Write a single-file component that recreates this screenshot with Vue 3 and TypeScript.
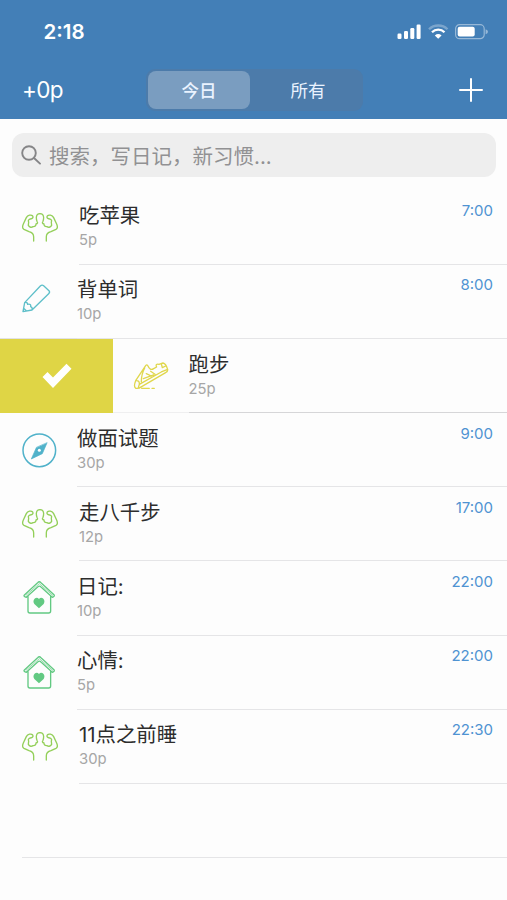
<script setup lang="ts">
import { ref } from 'vue'

type IconName = 'muscle' | 'pencil' | 'shoe' | 'compass' | 'house'

interface Habit {
  title: string
  points: string
  time: string
  icon: IconName
  inset?: boolean
  swiped?: boolean
}

const tabs = ['今日', '所有']
const activeTab = ref(0)

const habits: Habit[] = [
  { title: '吃苹果', points: '5p', time: '7:00', icon: 'muscle', inset: true },
  { title: '背单词', points: '10p', time: '8:00', icon: 'pencil' },
  { title: '跑步', points: '25p', time: '', icon: 'shoe', swiped: true },
  { title: '做面试题', points: '30p', time: '9:00', icon: 'compass' },
  { title: '走八千步', points: '12p', time: '17:00', icon: 'muscle', inset: true },
  { title: '日记:', points: '10p', time: '22:00', icon: 'house' },
  { title: '心情:', points: '5p', time: '22:00', icon: 'house' },
  { title: '11点之前睡', points: '30p', time: '22:30', icon: 'muscle', inset: true },
]

const halfFigure =
  'M72 138V126C72 115 67 112 58 110L43 103C39 101 38 94 41 87L50 68C54 60 65 58 69 63C72 68 68 71 62 72C56 74 55 77 57 81L56 91C60 98 66 98 70 95C76 96 79 92 79 87C84 86 85 83 82 79Q80 75 80 67Q81 56 91 56'
</script>

<template>
  <main class="screen">
    <header class="header">
      <div class="status">
        <span class="clock">2:18</span>
        <svg class="indicators" viewBox="0 0 92 18" fill="#fff">
          <rect x="0.5" y="10.5" width="4" height="5.5" rx="1.2" />
          <rect x="7" y="8" width="4" height="8" rx="1.2" />
          <rect x="13.3" y="5" width="4" height="11" rx="1.2" />
          <rect x="19.6" y="1.5" width="4" height="14.5" rx="1.2" />
          <g fill="none" stroke="#fff" stroke-width="2.3">
            <path d="M32 6.3C37 1.2 45.5 1.2 50.5 6.3" opacity=".3" />
            <path d="M35 9.3C38.5 5.8 44 5.8 47.5 9.3" />
          </g>
          <path d="M41.2 15.8L37.8 12.4Q41.2 9.5 44.6 12.4Z" />
          <rect x="58.6" y="1.7" width="28.6" height="14" rx="4" fill="none" stroke="#fff" stroke-width="1.2" opacity=".45" />
          <rect x="60.7" y="3.8" width="17" height="9.8" rx="2" />
          <path d="M88.6 6.3Q91 7 91 8.7T88.6 11.2Z" opacity=".45" />
        </svg>
      </div>
      <nav class="nav">
        <span class="total">+0p</span>
        <div class="segments">
          <button
            v-for="(tab, i) in tabs"
            :key="tab"
            class="segment"
            :class="{ active: activeTab === i }"
            @click="activeTab = i"
          >{{ tab }}</button>
        </div>
        <svg class="add" viewBox="0 0 24 24" stroke="#fff" stroke-width="2" stroke-linecap="round">
          <path d="M12 1V23M1 12H23" />
        </svg>
      </nav>
    </header>

    <div class="search">
      <svg class="magnifier" viewBox="0 0 20 20" fill="none" stroke="#858587" stroke-width="1.9" stroke-linecap="round">
        <circle cx="8" cy="8" r="6.8" />
        <path d="M13 13L19 18.6" />
      </svg>
      <span>搜索，写日记，新习惯...</span>
    </div>

    <ul class="list">
      <li v-for="(habit, i) in habits" :key="i" class="row" :class="{ swiped: habit.swiped, inset: habit.inset }">
        <div v-if="habit.swiped" class="done">
          <svg class="check" viewBox="0 0 30 26"><path d="M.5 14L5.5 9L11 14.5L24.5 .8L29.5 5.7L11 25Z" fill="#fff" /></svg>
        </div>
        <div class="icon-cell">
          <svg v-if="habit.icon === 'muscle'" class="icon" viewBox="34 42 112 112" stroke="#93cf59">
            <path :d="halfFigure" />
            <path :d="halfFigure" transform="matrix(-1 0 0 1 182 0)" />
          </svg>
          <svg v-else-if="habit.icon === 'pencil'" class="icon" viewBox="34 38 112 112" stroke="#5ebfc9">
            <path d="M40 124L45 97L92 47Q97 42 102 46L118 61Q122 66 117 70L67 119ZM45 97Q53 94 54 102Q65 100 63 109Q70 112 67 119M40 124L42 114L50 121" />
          </svg>
          <svg v-else-if="habit.icon === 'shoe'" class="icon" viewBox="399 64 112 112" stroke="#e0d74d">
            <path d="M407 135L437 90Q441 85 444 91Q450 106 461 99L470 94Q465 84 477 86L489 82Q498 84 503 101Q504 108 497 111L425 153Q416 160 407 158Q400 153 407 135ZM407 135Q419 133 418 146L415 156M418 146L484 109L503 101M434 97Q424 116 424 138M439 114L454 121M452 107L465 116M484 84L487 96L497 91M430 129L461 118M425 158H448M456 158H463" />
          </svg>
          <svg v-else-if="habit.icon === 'compass'" class="icon" viewBox="34 18 112 112" stroke="#50b2ca">
            <circle cx="89" cy="76" r="49" stroke-width="4.5" />
            <path d="M112 54L98 86L65 102L80 68Z" fill="#50b2ca" stroke-width="2" />
            <circle cx="89" cy="76" r="4.5" fill="#fff" stroke="none" />
          </svg>
          <svg v-else class="icon" viewBox="34 30 112 112" stroke="#62c982">
            <path d="M45 77L84 41Q89 36 94 41L133 77Q136 81 131 84L128 85L94 54Q89 49 84 54L50 85L45 83Q41 81 45 77ZM55 82V126Q55 132 61 132H117Q123 132 123 126V82" />
            <path d="M49 79L89 44L129 79" stroke-width="2" />
            <path d="M88 118L74 105C66 93 80 80 88 90C96 80 110 93 102 105Z" fill="#62c982" stroke="none" />
          </svg>
        </div>
        <div class="body">
          <div class="text">
            <span class="title">{{ habit.title }}</span>
            <span class="points">{{ habit.points }}</span>
          </div>
          <time class="time">{{ habit.time }}</time>
        </div>
      </li>
      <li class="row blank"></li>
    </ul>
  </main>
</template>

<style>
body {
  background: #fdfdfd;
}
</style>

<style scoped>
.screen {
  box-sizing: border-box;
  width: 507px;
  height: 900px;
  overflow: hidden;
  background: #fdfdfd;
  font-family: Inter, "Noto Sans CJK SC", sans-serif;
}
.header {
  height: 119px;
  background: #437fb7;
  color: #fff;
}
.status {
  display: flex;
  justify-content: space-between;
  align-items: center;
  height: 62px;
  padding: 1px 18.5px 0 43.5px;
  box-sizing: border-box;
}
.clock {
  font-size: 20.5px;
  font-weight: 600;
}
.indicators {
  width: 92px;
  height: 18px;
}
.nav {
  display: flex;
  align-items: center;
  justify-content: space-between;
  box-sizing: border-box;
  height: 57px;
  padding: 0 24.5px 2px 22px;
}
.total {
  width: 124px;
  font-size: 22.5px;
  letter-spacing: -0.7px;
}
.segments {
  display: flex;
  box-sizing: border-box;
  width: 217px;
  height: 42px;
  padding: 2px;
  margin-right: auto;
  border-radius: 9px;
  background: #4c7baa;
}
.segment {
  flex: 1;
  padding: 0 0 1px 5px;
  border: 0;
  border-radius: 8px;
  background: transparent;
  color: #eaf3ff;
  font: 400 17.5px Inter, "Noto Sans CJK SC", sans-serif;
}
.segment.active {
  flex: 0 0 102px;
  padding-left: 0;
  background: #7a9dc0;
  font-weight: 500;
}
.add {
  width: 24px;
  height: 24px;
}
.search {
  display: flex;
  align-items: center;
  gap: 8px;
  height: 44px;
  margin: 14px 11px 14px 12px;
  padding-left: 9px;
  border-radius: 12px;
  background: #eee;
  color: #919193;
  font-size: 20.5px;
  white-space: nowrap;
}
.magnifier {
  width: 20px;
  height: 20px;
}
.list {
  margin: 0;
  padding: 0;
  list-style: none;
}
.row {
  display: flex;
  height: 74.1px;
}
.icon-cell {
  flex: none;
  box-sizing: border-box;
  width: 77px;
  padding: 18px 0 0 20.5px;
}
.inset .icon-cell {
  width: 79px;
}
.icon {
  display: block;
  width: 37.3px;
  height: 37.3px;
  fill: none;
  stroke-width: 4;
  stroke-linecap: round;
  stroke-linejoin: round;
}
.body {
  display: flex;
  flex: 1;
  justify-content: space-between;
  box-sizing: border-box;
  padding: 9.400px 14px 0 0;
  border-bottom: 1px solid #e5e5e7;
}
.text {
  display: flex;
  flex-direction: column;
}
.title {
  color: #2d2d2d;
  font-size: 20.4px;
  font-kerning: none;
  line-height: 31px;
  white-space: nowrap;
}
.points {
  color: #a6a6a6;
  font-size: 14.8px;
  line-height: 18px;
}
.time {
  color: #4f93d2;
  font-size: 15px;
  line-height: 21px;
}
.swiped {
  box-sizing: border-box;
  border-top: 1px solid #e2e2e4;
  margin-top: -1px;
  height: 75.1px;
}
.swiped .body {
  border-bottom-color: #d6d6d8;
}
.done {
  display: flex;
  align-items: center;
  justify-content: center;
  box-sizing: border-box;
  width: 113px;
  background: #dfd545;
}
.check {
  width: 30px;
  height: 26px;
}
.swiped .icon-cell {
  width: 75.5px;
  padding-left: 19.5px;
  border-bottom: 1px solid #efeff0;
}
.blank {
  box-sizing: border-box;
  margin-left: 22px;
  border-bottom: 1px solid #e5e5e7;
}
</style>
